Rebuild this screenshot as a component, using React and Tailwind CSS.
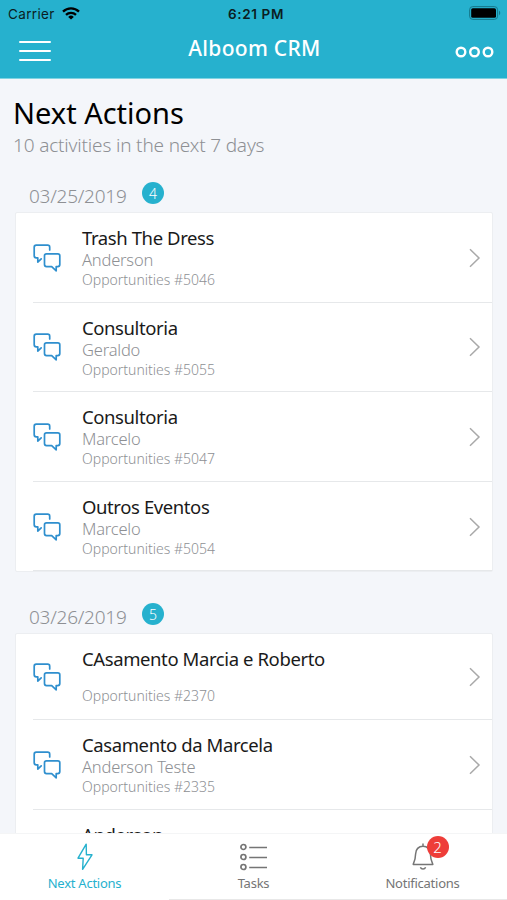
import React, { useState } from 'react';
import clsx from 'clsx';

const groups = [
  {
    date: '03/25/2019',
    count: 4,
    items: [
      { id: 5046, title: 'Trash The Dress', contact: 'Anderson' },
      { id: 5055, title: 'Consultoria', contact: 'Geraldo' },
      { id: 5047, title: 'Consultoria', contact: 'Marcelo' },
      { id: 5054, title: 'Outros Eventos', contact: 'Marcelo' }
    ]
  },
  {
    date: '03/26/2019',
    count: 5,
    items: [
      { id: 2370, title: 'CAsamento Marcia e Roberto', contact: '' },
      { id: 2335, title: 'Casamento da Marcela', contact: 'Anderson Teste' },
      { title: 'Anderson' }
    ]
  }
];

const ChatIcon = () => (
  <svg width="28" height="28" viewBox="0 0 28 28" fill="none" stroke="#2f8fce" strokeWidth="1.7" strokeLinejoin="round" strokeLinecap="round">
    <path d="M16.7 6V3.2a2 2 0 0 0-2-2H3.2a2 2 0 0 0-2 2v8.6a2 2 0 0 0 2 2h1.6v4.3l3.4-3.2" />
    <path d="M13.5 9.8h11.3a2 2 0 0 1 2 2v8.8a2 2 0 0 1-2 2h-1.6v4.2l-4.5-4.2h-5.2a2 2 0 0 1-2-2v-8.8a2 2 0 0 1 2-2z" />
  </svg>
);

const BoltIcon = () => (
  <svg width="16" height="28" viewBox="0 0 16 28" fill="none" stroke="currentColor" strokeWidth="1.4" strokeLinejoin="round">
    <path d="M9.2 1.2 1 15.2h5.2L5.6 26.4 15 11.8H9.4z" />
  </svg>
);

const ListIcon = () => (
  <svg width="28" height="28" viewBox="0 0 28 28" fill="none" stroke="currentColor" strokeWidth="1.7">
    <circle cx="3.4" cy="4" r="2.5" />
    <circle cx="3.4" cy="14" r="2.5" />
    <circle cx="3.4" cy="24" r="2.5" />
    <path d="M9.2 4.5h17.8M9.2 14.5h17.8M9.2 24.5h17.8" />
  </svg>
);

const BellIcon = () => (
  <svg width="24" height="28" viewBox="0 0 24 28" fill="none" stroke="currentColor" strokeWidth="1.5" strokeLinejoin="round">
    <path d="M12 .6v2.6M12 3.2c-4.400 0-7.400 3.200-7.400 7.800 0 4.600-.6 6.400-2.400 10.400h19.600c-1.800-4-2.400-5.800-2.400-10.400 0-4.600-3-7.800-7.400-7.800z" />
    <path d="M9.4 24.2c.4 1.2 1.4 1.9 2.6 1.9s2.2-.7 2.6-1.9" />
  </svg>
);

function StatusBar() {
  return (
    <div className="grid h-7 grid-cols-3 items-center pl-2 pr-1.5 font-['Inter',sans-serif] text-[#0b1d22]">
      <div className="flex items-center gap-[7px] text-[13.5px] tracking-[0.35px]">
        Carrier
        <svg className="-mt-0.5" width="18" height="13" viewBox="0 0 18 13" fill="none" stroke="#000" strokeWidth="2.3">
          <path d="M1 4.6a11.4 11.4 0 0 1 16 0" />
          <path d="M4 7.8a7.2 7.2 0 0 1 10 0" />
          <path d="M9 12.6 6.2 9.9a4 4 0 0 1 5.6 0z" fill="#000" stroke="none" />
        </svg>
      </div>
      <div className="whitespace-nowrap pl-[3px] text-center text-[13.5px] font-semibold tracking-[0.65px]">6:21 PM</div>
      <svg className="-mt-0.5 justify-self-end" width="32" height="14" viewBox="0 0 32 14">
        <rect x="0.6" y="0.6" width="28" height="12.8" rx="3.2" fill="none" stroke="#16788b" />
        <rect x="2.2" y="2.2" width="24.8" height="9.6" rx="1.6" fill="#000" />
        <path d="M30 4.8c1.6.5 1.6 3.9 0 4.4z" fill="#16788b" />
      </svg>
    </div>
  );
}

function Header() {
  return (
    <header className="h-[79px] shrink-0 border-b border-[#7fd3e2] bg-[#26b1ce]">
      <StatusBar />
      <div className="grid grid-cols-3 items-center pl-[19px] pr-[13px]">
        <button type="button" className="flex w-8 flex-col gap-[7px] pt-[6px]">
          <span className="h-[2.2px] w-full rounded-full bg-white" />
          <span className="h-[2.2px] w-full rounded-full bg-white" />
          <span className="h-[2.2px] w-full rounded-full bg-white" />
        </button>
        <h1 className="-ml-1.5 whitespace-nowrap pl-[2px] text-center text-[21px] font-medium leading-10 tracking-[0.3px] text-white">Alboom CRM</h1>
        <svg className="mt-[7px] justify-self-end" width="39" height="12" viewBox="0 0 39 12" fill="none" stroke="#fff" strokeWidth="2.4">
          <circle cx="6" cy="6" r="4.3" />
          <circle cx="19.5" cy="6" r="4.3" />
          <circle cx="33" cy="6" r="4.3" />
        </svg>
      </div>
    </header>
  );
}

function ActionRow({ item }) {
  // the last row is only partly visible above the tab bar
  if (!item.id) {
    return (
      <li className="ml-[66px] pt-[13px] text-[18.5px] leading-6 tracking-[-0.4px] text-[#1a1a1a]">{item.title}</li>
    );
  }

  return (
    <li className={clsx('ml-[17px] flex border-b border-[#e6e8ea] pr-[11px]', item.contact ? 'h-[89.6px]' : 'h-[85.6px]')}>
      <div className={clsx('flex w-[49px] items-center', item.contact && 'pt-px')}>
        <ChatIcon />
      </div>
      <div className="flex-1 pt-[13px]">
        <p className="whitespace-nowrap text-[18.5px] leading-6 tracking-[-0.4px] text-[#1a1a1a]">{item.title}</p>
        {item.contact ? (
          <p className="text-[16.5px] font-light leading-5 tracking-[-0.2px] text-[#8e9094]">{item.contact}</p>
        ) : (
          <div className="h-[15px]" />
        )}
        <p className="text-[14px] font-light leading-[19px] text-[#8e9094]">Opportunities #{item.id}</p>
      </div>
      <svg className={clsx('self-center', item.contact && 'mt-px')} width="12" height="20" viewBox="0 0 12 20" fill="none" stroke="#a9a9a9" strokeWidth="1.5">
        <path d="M1 1.2 10 10 1 18.8" />
      </svg>
    </li>
  );
}

function TabBar() {
  const [active, setActive] = useState('Next Actions');

  const tabs = [
    { label: 'Next Actions', icon: <BoltIcon /> },
    { label: 'Tasks', icon: <ListIcon /> },
    { label: 'Notifications', icon: <BellIcon />, badge: 2 }
  ];

  return (
    <nav className="grid h-[67px] shrink-0 grid-cols-3 border-t border-[#f4f5f6] bg-white">
      {tabs.map(tab => (
        <button
          key={tab.label}
          type="button"
          onClick={() => setActive(tab.label)}
          className={clsx(
            'flex flex-col items-center pt-[9px]',
            active === tab.label ? 'text-[#26b1ce]' : 'border-b border-[#e8e8e8] text-[#757575]'
          )}
        >
          <span className="relative">
            {tab.icon}
            {tab.badge && (
              <span className="absolute -top-[7px] left-4 flex size-[22px] items-center justify-center rounded-full bg-[#ee3d39] text-[15px] font-light text-white">
                {tab.badge}
              </span>
            )}
          </span>
          <span className="mt-[3px] text-[13px] leading-[18px] tracking-[-0.25px]">{tab.label}</span>
        </button>
      ))}
    </nav>
  );
}

function App() {
  return (
    <div className="flex h-[900px] w-full flex-col overflow-hidden bg-[#f4f6fa] font-['Noto_Sans',sans-serif]">
      <Header />
      <main className="min-h-0 flex-1 overflow-hidden">
        <div className="pl-[13px] pt-[14px]">
          <h2 className="text-[29px] leading-10 text-black">Next Actions</h2>
          <p className="text-[19px] font-light leading-6 tracking-[-0.17px] text-[#8e9094]">10 activities in the next 7 days</p>
        </div>
        {groups.map((group, i) => (
          <section key={group.date} className={i === 0 ? 'pt-[24px]' : 'pt-[30px]'}>
            <div className="flex h-[31px] items-start pl-[29px]">
              <span className="w-[113px] pt-[3px] text-[19px] font-light leading-6 tracking-[-0.25px] text-[#8e9094]">{group.date}</span>
              <span className="mt-px flex size-[22px] items-center justify-center rounded-full bg-[#26b1ce] text-[14px] font-light text-white">
                {group.count}
              </span>
            </div>
            <ul className="ml-[15px] mr-[14px] rounded-[2px] border border-[#eceef1] bg-white">
              {group.items.map(item => (
                <ActionRow key={item.title + item.id} item={item} />
              ))}
            </ul>
          </section>
        ))}
      </main>
      <TabBar />
    </div>
  );
}

export default App;
